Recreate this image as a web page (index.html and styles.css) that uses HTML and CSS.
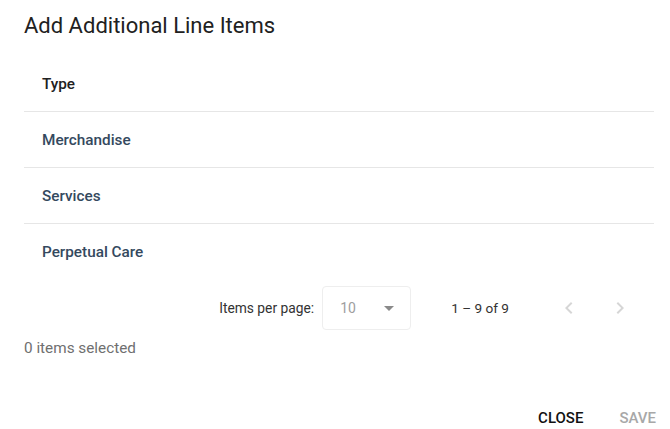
FILE: index.html
```html
<!DOCTYPE html>
<html lang="en">
<head>
  <meta charset="UTF-8" />
  <title>Add Additional Line Items</title>
  <link rel="stylesheet" href="styles.css">
</head>
<body>
  <div class="dialog">
    <h2 class="title">Add Additional Line Items</h2>

    <div class="table">
      <div class="row head">Type</div>
      <div class="row">Merchandise</div>
      <div class="row">Services</div>
      <div class="row last">Perpetual Care</div>
    </div>

    <div class="paginator">
      <span class="per-page">Items per page:</span>
      <div class="select">
        <span>10</span>
        <svg width="10" height="5" viewBox="0 0 10 5"><path d="M0 0 L10 0 L5 5 Z" fill="#8a8a8a"/></svg>
      </div>
      <span class="range">1 – 9 of 9</span>
      <button class="icon-btn" disabled>
        <svg width="24" height="24" viewBox="0 0 24 24"><path d="M15.4 7.4 L14 6 L8 12 L14 18 L15.4 16.6 L10.8 12 Z" fill="#d6d6d6"/></svg>
      </button>
      <button class="icon-btn" disabled>
        <svg width="24" height="24" viewBox="0 0 24 24"><path d="M10 6 L8.6 7.4 L13.2 12 L8.6 16.6 L10 18 L16 12 Z" fill="#d6d6d6"/></svg>
      </button>
    </div>

    <div class="selected">0 items selected</div>

    <div class="actions">
      <button class="text-btn">Close</button>
      <button class="text-btn" disabled>Save</button>
    </div>
  </div>
</body>
</html>
```

FILE: styles.css
```css
body {
  margin: 0;
  background: #fff;
  font-family: Roboto, "Noto Sans", Arial, sans-serif;
  color: #212121;
}
.dialog {
  padding: 10px 14px 0 24px;
}
.title {
  margin: 0 0 14px 0;
  font-size: 22px;
  font-weight: 400;
  line-height: 32px;
  color: #212121;
}
.table {
  margin-right: 2px;
}
.row {
  height: 56px;
  display: flex;
  align-items: center;
  padding-left: 18px;
  font-size: 15.3px;
  font-weight: 500;
  color: #34495e;
  border-bottom: 1px solid #e6e6e6;
  box-sizing: border-box;
}
.row.head {
  color: #212121;
}
.row.last {
  border-bottom: none;
}
.paginator {
  height: 56px;
  display: flex;
  align-items: center;
  justify-content: flex-end;
  padding-right: 12px;
  font-size: 13.8px;
  color: #333;
}
.per-page {
  margin-right: 8px;
}
.select {
  width: 89px;
  height: 44px;
  box-sizing: border-box;
  border: 1px solid #eeeeee;
  border-radius: 4px;
  display: flex;
  align-items: center;
  justify-content: space-between;
  padding: 0 16px 0 17px;
  color: #9e9e9e;
  font-size: 14px;
}
.range {
  margin: 0 33px 0 40px;
  font-size: 13.6px;
}
.icon-btn {
  width: 48px;
  height: 40px;
  border: none;
  background: transparent;
  padding: 0;
  margin-left: 3px;
  display: flex;
  align-items: center;
  justify-content: center;
}
.selected {
  margin-top: 4px;
  font-size: 15.3px;
  color: #6f6f6f;
  line-height: 16px;
}
.actions {
  display: flex;
  justify-content: flex-end;
  gap: 36px;
  margin-top: 44px;
}
.text-btn {
  border: none;
  background: transparent;
  padding: 0;
  height: 36px;
  font-family: Roboto, "Noto Sans", Arial, sans-serif;
  font-size: 15px;
  font-weight: 500;
  text-transform: uppercase;
  color: #111;
  cursor: pointer;
}
.text-btn:disabled {
  color: #a8a8a8;
  cursor: default;
}
```
